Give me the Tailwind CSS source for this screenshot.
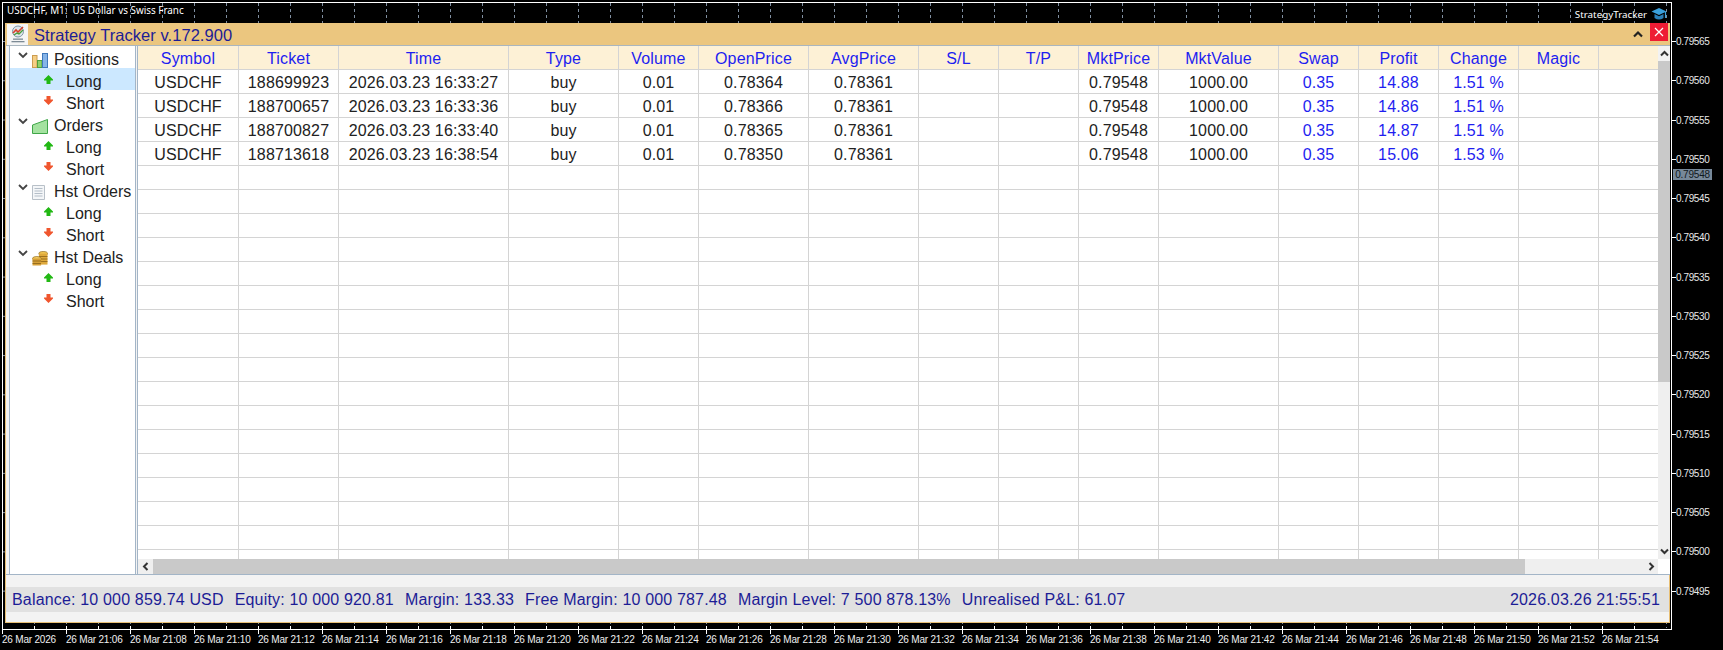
<!DOCTYPE html>
<html>
<head>
<meta charset="utf-8">
<script src="https://cdn.jsdelivr.net/npm/@tailwindcss/browser@4"></script>
</head>
<body class="m-0 bg-black overflow-hidden font-['Liberation_Sans',Arial,sans-serif]">
<div class="relative w-[1723px] h-[650px] bg-black overflow-hidden">

  <!-- chart frame and grid -->
  <svg class="absolute left-0 top-0" width="1723" height="650" xmlns="http://www.w3.org/2000/svg">
    <defs>
      <pattern id="vg" x="2" y="3" width="32" height="6" patternUnits="userSpaceOnUse"><rect x="0" y="0" width="1" height="3" fill="#7f8ea0"/></pattern>
      <pattern id="hg" x="2" y="41" width="6" height="39.26" patternUnits="userSpaceOnUse"><rect x="0" y="0" width="3" height="1" fill="#7f8ea0"/></pattern>
    </defs>
    <rect x="3" y="3" width="1667" height="625" fill="url(#vg)"/>
    <rect x="3" y="3" width="1667" height="625" fill="url(#hg)"/>
    <rect x="2" y="2" width="1669" height="1" fill="#fff"/>
    <rect x="2" y="2" width="1" height="628" fill="#fff"/>
    <rect x="1671" y="2" width="1" height="628" fill="#fff"/>
    <rect x="2" y="629" width="1670" height="1" fill="#fff"/>
    <g id="ticks" fill="#fff"></g>
  </svg>

  <!-- chart labels -->
  <div class="absolute left-[7px] top-[4px] text-[9.9px] leading-[12px] text-white whitespace-pre font-['Noto_Sans',sans-serif]">USDCHF, M1:  US Dollar vs Swiss Franc</div>
  <div class="absolute right-[56px] top-[7px] flex items-center gap-[4px]">
    <span class="text-[9.8px] leading-[13px] text-white font-['Noto_Sans',sans-serif]">StrategyTracker</span>
    <svg width="16" height="14" viewBox="0 0 16 14"><path d="M8 1 L15.5 4.5 L8 8 L.5 4.5Z" fill="#3aa0dc"/><path d="M3.5 7 L3.5 11 Q8 14 12.5 11 L12.5 7 L8 9.2Z" fill="#2a7fb8"/><path d="M14.5 5 V11" stroke="#3aa0dc" stroke-width="1.2"/></svg>
  </div>
  <div id="prices"></div>
  <div class="absolute left-[1673px] top-[169px] w-[39px] h-[11px] bg-[#778899] text-[#101820] text-[10px] leading-[11px] text-center font-['Liberation_Sans',sans-serif] tracking-[-0.2px]">0.79548</div>
  <div id="times"></div>

  <!-- window -->
  <div class="absolute left-[5px] top-[23px] w-[1665px] h-[600px] flex flex-col bg-[#f3f3f3] border-x border-b border-[#e8bf74]">
    <!-- title -->
    <div class="h-[22px] shrink-0 bg-[#ebc67f] flex items-center -mx-px">
      <div class="w-[21px] h-[21px] ml-[2px] bg-[#f5f5f5] flex items-center justify-center">
        <svg width="18" height="20" viewBox="0 0 18 20">
          <circle cx="9" cy="7.5" r="5.5" fill="#dfe6ea" stroke="#7f97a8" stroke-width="1"/>
          <path d="M4 9 L7 6 L9 8 L14 3" fill="none" stroke="#d8402c" stroke-width="1.6"/>
          <path d="M5 11 L8 9 L10 10 L14 6" fill="none" stroke="#4a9d3a" stroke-width="1.4"/>
          <rect x="4" y="14.5" width="10" height="1.3" fill="#7c8a94"/>
          <rect x="2.5" y="17" width="13" height="1.3" fill="#7c8a94"/>
        </svg>
      </div>
      <span class="ml-[6px] pt-[2px] text-[16.5px] leading-[22px] tracking-[0.05px] text-[#1c1c96]">Strategy Tracker v.172.900</span>
      <div class="ml-auto flex items-center">
        <svg width="10" height="8" viewBox="0 0 10 8" class="mr-[7px]"><path d="M1 6.5 L5 2.5 L9 6.5" fill="none" stroke="#222" stroke-width="2.2"/></svg>
        <div class="w-[18px] h-[18px] mr-[2px] mb-[4px] bg-[#ee1c34] flex items-center justify-center">
          <svg width="10" height="10" viewBox="0 0 10 10"><path d="M1 1 L9 9 M9 1 L1 9" stroke="#fff" stroke-width="1.2"/></svg>
        </div>
      </div>
    </div>

    <!-- body -->
    <div class="h-[530px] shrink-0 flex border-b border-[#a3b5c7] bg-[#f3f3f3] pl-[3px] border-t border-t-[#a9b6bf] -mr-px">
      <!-- tree -->
      <div class="w-[127px] shrink-0 bg-white border-x border-[#a3b5c7] text-[16px] text-[#222]">
        <div class="h-[22px] relative">
          <svg class="absolute left-[8px] top-[6px]" width="10" height="7" viewBox="0 0 10 7"><path d="M1 1 L5 5 L9 1" fill="none" stroke="#444" stroke-width="1.8"/></svg>
          <svg class="absolute left-[22px] top-[7px]" width="16" height="15" viewBox="0 0 16 15"><rect x=".5" y="2.5" width="4.5" height="12" fill="#f5cf85" stroke="#cc9c50"/><rect x="5.5" y="7.5" width="4.5" height="7" fill="#8fd06c" stroke="#4fa03c"/><rect x="10.5" y=".5" width="5" height="14" fill="#86b4e8" stroke="#3f78bc"/></svg>
          <span class="absolute left-[44px] top-[5px] leading-[18px]">Positions</span>
        </div>
        <div class="h-[22px] relative bg-[#cce8ff]">
          <svg class="absolute left-[34px] top-[7px]" width="9" height="9" viewBox="0 0 9 9"><path d="M4.5 0 L9 4.5 V5.5 H6.5 V9 H2.5 V5.5 H0 V4.5Z" fill="#22b814"/></svg>
          <span class="absolute left-[56px] top-[5px] leading-[18px]">Long</span>
        </div>
        <div class="h-[22px] relative">
          <svg class="absolute left-[34px] top-[6px]" width="9" height="9" viewBox="0 0 9 9"><path d="M2.5 0 H6.5 V3.5 H9 V4.5 L4.5 9 L0 4.5 V3.5 H2.5Z" fill="#f0562e"/></svg>
          <span class="absolute left-[56px] top-[5px] leading-[18px]">Short</span>
        </div>
        <div class="h-[22px] relative">
          <svg class="absolute left-[8px] top-[6px]" width="10" height="7" viewBox="0 0 10 7"><path d="M1 1 L5 5 L9 1" fill="none" stroke="#444" stroke-width="1.8"/></svg>
          <svg class="absolute left-[22px] top-[7px]" width="16" height="15" viewBox="0 0 16 15"><path d="M.5 6 L6 4 L15.5 .5 V14.5 H.5Z" fill="#a4e2a0" stroke="#3fa648"/></svg>
          <span class="absolute left-[44px] top-[5px] leading-[18px]">Orders</span>
        </div>
        <div class="h-[22px] relative">
          <svg class="absolute left-[34px] top-[7px]" width="9" height="9" viewBox="0 0 9 9"><path d="M4.5 0 L9 4.5 V5.5 H6.5 V9 H2.5 V5.5 H0 V4.5Z" fill="#22b814"/></svg>
          <span class="absolute left-[56px] top-[5px] leading-[18px]">Long</span>
        </div>
        <div class="h-[22px] relative">
          <svg class="absolute left-[34px] top-[6px]" width="9" height="9" viewBox="0 0 9 9"><path d="M2.5 0 H6.5 V3.5 H9 V4.5 L4.5 9 L0 4.5 V3.5 H2.5Z" fill="#f0562e"/></svg>
          <span class="absolute left-[56px] top-[5px] leading-[18px]">Short</span>
        </div>
        <div class="h-[22px] relative">
          <svg class="absolute left-[8px] top-[6px]" width="10" height="7" viewBox="0 0 10 7"><path d="M1 1 L5 5 L9 1" fill="none" stroke="#444" stroke-width="1.8"/></svg>
          <svg class="absolute left-[22px] top-[7px]" width="13" height="15" viewBox="0 0 13 15"><path d="M.5 .5 H12.5 V14.5 H.5Z" fill="#f4f6f8" stroke="#b8c0c8"/><path d="M2.5 3.5 H10.5 M2.5 6 H10.5 M2.5 8.5 H10.5 M2.5 11 H10.5" stroke="#b4bec8"/></svg>
          <span class="absolute left-[44px] top-[5px] leading-[18px]">Hst Orders</span>
        </div>
        <div class="h-[22px] relative">
          <svg class="absolute left-[34px] top-[7px]" width="9" height="9" viewBox="0 0 9 9"><path d="M4.5 0 L9 4.5 V5.5 H6.5 V9 H2.5 V5.5 H0 V4.5Z" fill="#22b814"/></svg>
          <span class="absolute left-[56px] top-[5px] leading-[18px]">Long</span>
        </div>
        <div class="h-[22px] relative">
          <svg class="absolute left-[34px] top-[6px]" width="9" height="9" viewBox="0 0 9 9"><path d="M2.5 0 H6.5 V3.5 H9 V4.5 L4.5 9 L0 4.5 V3.5 H2.5Z" fill="#f0562e"/></svg>
          <span class="absolute left-[56px] top-[5px] leading-[18px]">Short</span>
        </div>
        <div class="h-[22px] relative">
          <svg class="absolute left-[8px] top-[6px]" width="10" height="7" viewBox="0 0 10 7"><path d="M1 1 L5 5 L9 1" fill="none" stroke="#444" stroke-width="1.8"/></svg>
          <svg class="absolute left-[22px] top-[7px]" width="16" height="15" viewBox="0 0 16 15"><ellipse cx="11.2" cy="2.6" rx="4.3" ry="2.1" fill="#f0c552" stroke="#8f6a1e" stroke-width=".7"/><rect x="6.9" y="2.6" width="8.6" height="11" fill="#dea93c"/><path d="M6.9 5.5 H15.5 M6.9 8 H15.5 M6.9 10.5 H15.5" stroke="#8a6218" stroke-width=".8"/><ellipse cx="4.8" cy="7.5" rx="4.3" ry="2" fill="#f4cb60" stroke="#8f6a1e" stroke-width=".7"/><rect x=".5" y="7.5" width="8.6" height="7" fill="#d6a038"/><path d="M.5 10 H9 M.5 12.5 H9" stroke="#8a6218" stroke-width=".8"/></svg>
          <span class="absolute left-[44px] top-[5px] leading-[18px]">Hst Deals</span>
        </div>
        <div class="h-[22px] relative">
          <svg class="absolute left-[34px] top-[7px]" width="9" height="9" viewBox="0 0 9 9"><path d="M4.5 0 L9 4.5 V5.5 H6.5 V9 H2.5 V5.5 H0 V4.5Z" fill="#22b814"/></svg>
          <span class="absolute left-[56px] top-[5px] leading-[18px]">Long</span>
        </div>
        <div class="h-[22px] relative">
          <svg class="absolute left-[34px] top-[6px]" width="9" height="9" viewBox="0 0 9 9"><path d="M2.5 0 H6.5 V3.5 H9 V4.5 L4.5 9 L0 4.5 V3.5 H2.5Z" fill="#f0562e"/></svg>
          <span class="absolute left-[56px] top-[5px] leading-[18px]">Short</span>
        </div>
      </div>

      <!-- table area -->
      <div class="ml-px flex-1 min-w-0 border-l border-[#a3b5c7] bg-white flex flex-col">
        <div class="flex flex-1 min-h-0">
          <div id="grid" class="w-[1520px] shrink-0 overflow-hidden text-[16px] text-[#222] tracking-[0.15px]"></div>
          <!-- vertical scrollbar -->
          <div class="flex-1 bg-[#efefef] flex flex-col">
            <div class="h-[15px] flex items-center justify-center bg-[#f2f2f2]">
              <svg width="9" height="7" viewBox="0 0 9 7"><path d="M1 5.5 L4.5 2 L8 5.5" fill="none" stroke="#333" stroke-width="2"/></svg>
            </div>
            <div class="h-[321px] bg-[#c9c9c9]"></div>
            <div class="flex-1"></div>
            <div class="h-[15px] flex items-center justify-center">
              <svg width="9" height="7" viewBox="0 0 9 7"><path d="M1 1.5 L4.5 5 L8 1.5" fill="none" stroke="#333" stroke-width="2"/></svg>
            </div>
          </div>
        </div>
        <!-- horizontal scrollbar -->
        <div class="h-[15px] shrink-0 flex bg-white">
          <div class="w-[1520px] bg-[#efefef] flex">
            <div class="w-[15px] flex items-center justify-center">
              <svg width="7" height="9" viewBox="0 0 7 9"><path d="M5.5 1 L2 4.5 L5.5 8" fill="none" stroke="#333" stroke-width="2"/></svg>
            </div>
            <div class="w-[1372px] bg-[#c9c9c9]"></div>
            <div class="flex-1 flex items-center justify-end pr-[3px]">
              <svg width="7" height="9" viewBox="0 0 7 9"><path d="M1.5 1 L5 4.5 L1.5 8" fill="none" stroke="#333" stroke-width="2"/></svg>
            </div>
          </div>
        </div>
      </div>
    </div>

    <!-- status -->
    <div class="mt-[12px] h-[25px] shrink-0 bg-[#e1e1e1] flex items-center pl-[6px] pr-[9px] pt-px text-[16px] text-[#1c1c96] gap-[11px] whitespace-nowrap tracking-[0.17px]">
      <span>Balance: 10 000 859.74 USD</span>
      <span>Equity: 10 000 920.81</span>
      <span>Margin: 133.33</span>
      <span>Free Margin: 10 000 787.48</span>
      <span>Margin Level: 7 500 878.13%</span>
      <span>Unrealised P&amp;L: 61.07</span>
      <span class="ml-auto">2026.03.26 21:55:51</span>
    </div>
  </div>
</div>

<script>
  var cols = 'grid grid-cols-[101px_100px_170px_110px_80px_110px_110px_80px_80px_80px_120px_80px_80px_80px_80px_60px]';
  var head = ['Symbol','Ticket','Time','Type','Volume','OpenPrice','AvgPrice','S/L','T/P','MktPrice','MktValue','Swap','Profit','Change','Magic',''];
  var rows = [
    ['USDCHF','188699923','2026.03.23 16:33:27','buy','0.01','0.78364','0.78361','','','0.79548','1000.00','0.35','14.88','1.51 %','',''],
    ['USDCHF','188700657','2026.03.23 16:33:36','buy','0.01','0.78366','0.78361','','','0.79548','1000.00','0.35','14.86','1.51 %','',''],
    ['USDCHF','188700827','2026.03.23 16:33:40','buy','0.01','0.78365','0.78361','','','0.79548','1000.00','0.35','14.87','1.51 %','',''],
    ['USDCHF','188713618','2026.03.23 16:38:54','buy','0.01','0.78350','0.78361','','','0.79548','1000.00','0.35','15.06','1.53 %','','']
  ];
  var h = '<div class="' + cols + ' h-6 bg-[#fdf1d6] border-b border-[#d4d4d4] text-[#1e1ef0]">';
  head.forEach(function(t,i){ h += '<div class="flex items-center justify-center pt-px ' + (i<15?'border-r border-[#d4d4d4]':'') + '">' + t + '</div>'; });
  h += '</div>';
  for (var r=0;r<20;r++){
    var d = rows[r] || head.map(function(){return '';});
    h += '<div class="' + cols + ' h-6 border-b border-[#d4d4d4]">';
    d.forEach(function(t,i){
      h += '<div class="flex items-center justify-center pt-px ' + (i<15?'border-r border-[#d4d4d4] ':'') + (i>=11&&i<=13?'text-[#1e1ef0]':'') + '">' + t + '</div>';
    });
    h += '</div>';
  }
  h += '<div class="' + cols + ' h-[9px]">';
  head.forEach(function(t,i){ h += '<div class="' + (i<15?'border-r border-[#d4d4d4]':'') + '"></div>'; });
  h += '</div>';
  document.getElementById('grid').innerHTML = h;

  var pv = ['0.79565','0.79560','0.79555','0.79550','0.79545','0.79540','0.79535','0.79530','0.79525','0.79520','0.79515','0.79510','0.79505','0.79500','0.79495'];
  var py = [41,80,120,159,198,237,277,316,355,394,434,473,512,551,591];
  var ph = '', tk = '';
  pv.forEach(function(v,i){
    ph += '<div class="absolute left-[1676px] w-[44px] h-3 leading-3 text-[10px] text-[#e8e8e8] tracking-[-0.4px]" style="top:' + (py[i]-5) + 'px">' + v + '</div>';
    tk += '<rect x="1672" y="' + py[i] + '" width="4" height="1"/>';
  });
  document.getElementById('prices').innerHTML = ph;
  var th = '';
  for (var k=0;k<26;k++){
    var x = 2 + 64*k;
    var m = 6 + 2*(k-1);
    var lbl = k===0 ? '26 Mar 2026' : '26 Mar 21:' + (m<10?'0':'') + m;
    th += '<div class="absolute top-[634px] h-3 leading-3 text-[10px] text-[#f0f0f0] tracking-[-0.2px] whitespace-nowrap" style="left:' + x + 'px">' + lbl + '</div>';
    tk += '<rect x="' + x + '" y="626" width="1" height="8"/>';
    tk += '<rect x="' + (x+32) + '" y="626" width="1" height="3"/>';
  }
  document.getElementById('times').innerHTML = th;
  document.getElementById('ticks').innerHTML = tk;
</script>
</body>
</html>
